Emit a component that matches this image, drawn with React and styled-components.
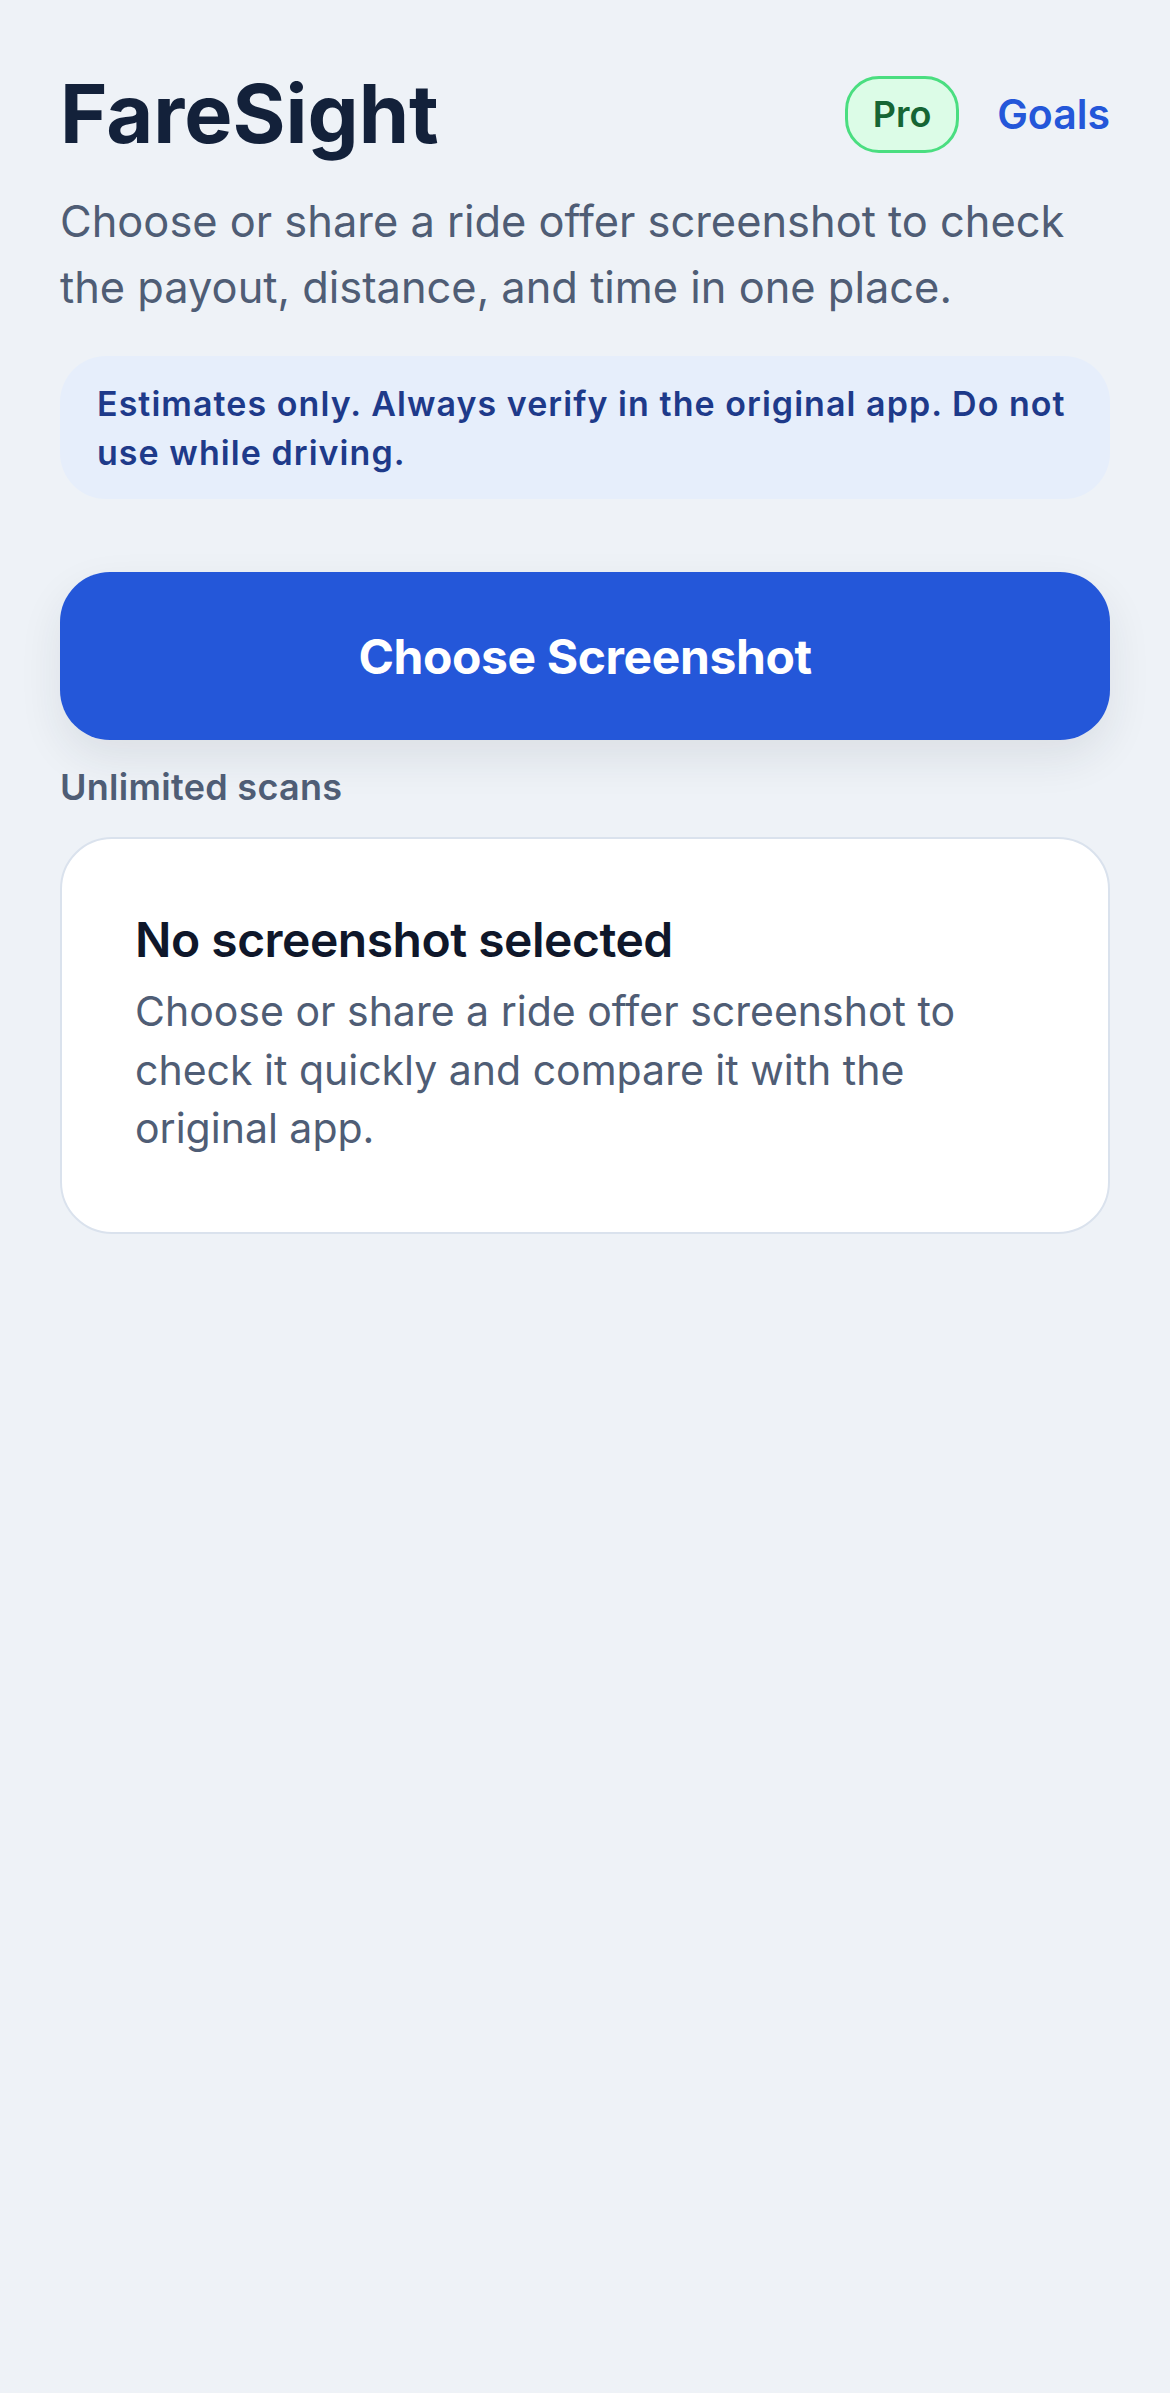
import React from 'react';
import styled, { createGlobalStyle } from 'styled-components';

const COLORS = {
  page: '#eef2f7',
  ink: '#13213a',
  inkStrong: '#0f172a',
  muted: '#4f5d75',
  blue: '#2457d9',
  noticeBg: '#e6eefb',
  noticeInk: '#1e3a8a',
  border: '#dae2ed',
  proBg: '#dcfce7',
  proBorder: '#4ade80',
  proInk: '#166534',
};

const GlobalStyle = createGlobalStyle`
  * {
    box-sizing: border-box;
  }

  html,
  body {
    margin: 0;
    padding: 0;
    background: ${COLORS.page};
  }

  body {
    font-family: Inter, 'Noto Sans', 'Liberation Sans', sans-serif;
    -webkit-font-smoothing: antialiased;
  }
`;

const App = () => {
  return (
    <>
      <GlobalStyle />
      <Page>
        {/* Title row */}
        <Header>
          <Title>FareSight</Title>
          <HeaderActions>
            <ProBadge>Pro</ProBadge>
            <GoalsLink href="#goals">Goals</GoalsLink>
          </HeaderActions>
        </Header>

        <Intro>
          Choose or share a ride offer screenshot to check the payout,
          distance, and time in one place.
        </Intro>

        <Notice>
          Estimates only. Always verify in the original app. Do not use while
          driving.
        </Notice>

        <PrimaryButton type="button">Choose Screenshot</PrimaryButton>

        <ScanNote>Unlimited scans</ScanNote>

        {/* Empty state */}
        <EmptyCard>
          <CardTitle>No screenshot selected</CardTitle>
          <CardText>
            Choose or share a ride offer screenshot to check it quickly and
            compare it with the original app.
          </CardText>
        </EmptyCard>
      </Page>
    </>
  );
};

const Page = styled.main`
  display: flex;
  flex-direction: column;
  min-height: 2393px;
  padding: 70px 60px 60px;
  background: ${COLORS.page};
`;

const Header = styled.header`
  display: flex;
  align-items: center;
  justify-content: space-between;
`;

const Title = styled.h1`
  margin: 0;
  font-size: 81px;
  line-height: 88px;
  font-weight: 700;
  letter-spacing: 0;
  color: ${COLORS.ink};
`;

const HeaderActions = styled.div`
  display: flex;
  align-items: center;
  gap: 38px;
`;

const ProBadge = styled.span`
  display: inline-flex;
  align-items: center;
  justify-content: center;
  width: 114px;
  height: 77px;
  border: 3px solid ${COLORS.proBorder};
  border-radius: 34px;
  background: ${COLORS.proBg};
  color: ${COLORS.proInk};
  font-size: 36px;
  font-weight: 600;
`;

const GoalsLink = styled.a`
  color: ${COLORS.blue};
  font-size: 41px;
  font-weight: 600;
  text-decoration: none;
`;

const Intro = styled.p`
  margin: 30px 0 0;
  font-size: 43.4px;
  line-height: 66px;
  font-weight: 400;
  color: ${COLORS.muted};
`;

const Notice = styled.div`
  margin-top: 36px;
  padding: 23px 22px 22px 37px;
  border-radius: 46px;
  background: ${COLORS.noticeBg};
  color: ${COLORS.noticeInk};
  font-size: 34px;
  line-height: 49px;
  font-weight: 600;
  letter-spacing: 1.05px;
`;

const PrimaryButton = styled.button`
  margin-top: 73px;
  height: 168px;
  width: 100%;
  border: none;
  border-radius: 50px;
  background: ${COLORS.blue};
  color: #ffffff;
  font-family: inherit;
  font-size: 48px;
  font-weight: 700;
  letter-spacing: -0.4px;
  box-shadow: 0 18px 44px rgba(30, 41, 59, 0.09);
  cursor: pointer;
`;

const ScanNote = styled.div`
  margin-top: 24px;
  font-size: 36px;
  line-height: 47px;
  font-weight: 600;
  letter-spacing: 0.3px;
  color: ${COLORS.muted};
`;

const EmptyCard = styled.section`
  margin-top: 26px;
  padding: 72px 72px 74px 73px;
  border: 2px solid ${COLORS.border};
  border-radius: 52px;
  background: #ffffff;
`;

const CardTitle = styled.h2`
  margin: 0;
  font-size: 48px;
  line-height: 58px;
  font-weight: 600;
  letter-spacing: -0.5px;
  color: ${COLORS.inkStrong};
`;

const CardText = styled.p`
  margin: 13px 0 0;
  font-size: 41px;
  line-height: 58.5px;
  font-weight: 400;
  color: ${COLORS.muted};
`;

export default App;
